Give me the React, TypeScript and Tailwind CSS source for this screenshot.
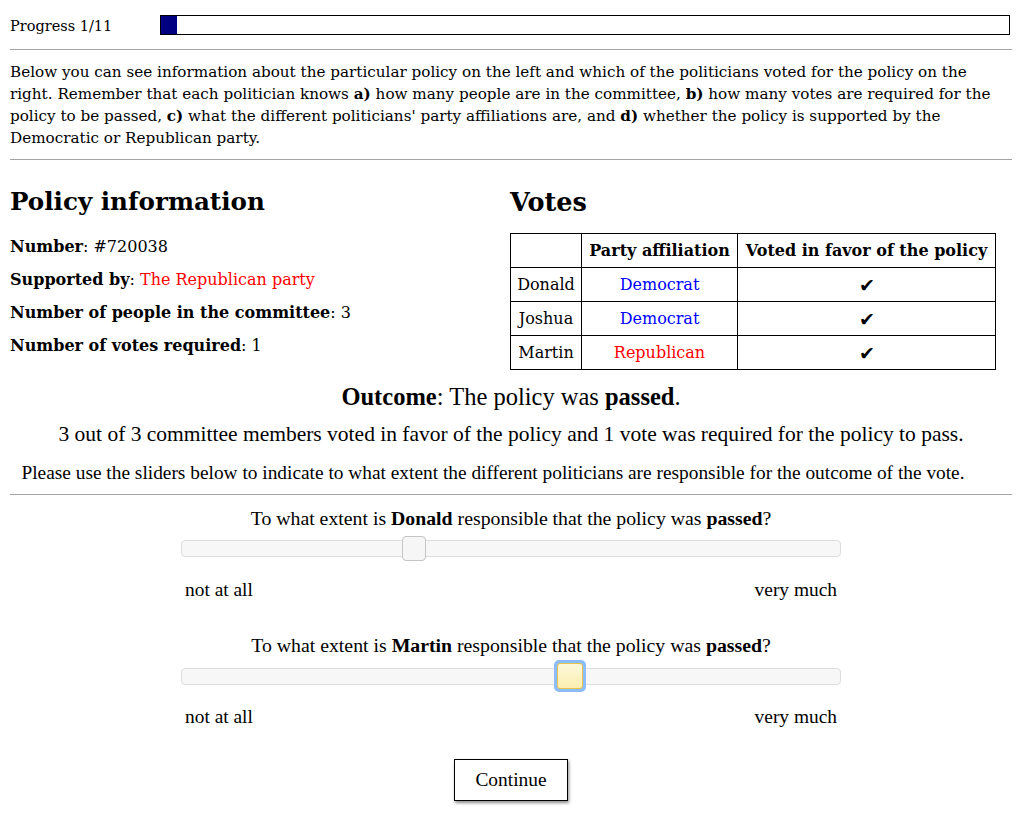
import React from 'react';

const rows = [
  { name: 'Donald', party: 'Democrat' },
  { name: 'Joshua', party: 'Democrat' },
  { name: 'Martin', party: 'Republican' },
];

function Slider({
  name,
  pos,
  focused,
  trackMt,
}: {
  name: string;
  pos: number;
  focused?: boolean;
  trackMt: string;
}) {
  return (
    <div className="mx-auto w-[660px]">
      <p className="whitespace-nowrap text-center text-[19.8px] leading-[24px]">
        To what extent is <b>{name}</b> responsible that the policy was <b>passed</b>?
      </p>
      <div className={`relative h-[17px] rounded-[4px] border border-[#dddddd] bg-[#f7f7f7] ${trackMt}`}>
        {focused ? (
          <div
            className="absolute top-[-9px] h-[32px] w-[32px] -translate-x-1/2 rounded-[5px] bg-[#8dbcfa] p-[3px]"
            style={{ left: `${pos}%` }}
          >
            <div className="h-full w-full rounded-[3px] border border-[#e6c34a] bg-gradient-to-b from-[#fef8da] to-[#fcefb0]" />
          </div>
        ) : (
          <div
            className="absolute top-[-5px] h-[25px] w-[24px] -translate-x-1/2 rounded-[4px] border border-[#c5c5c5] bg-[#f6f6f6]"
            style={{ left: `${pos}%` }}
          />
        )}
      </div>
    </div>
  );
}

function Labels({ mt }: { mt: string }) {
  return (
    <div className={`mx-auto flex w-[660px] justify-between px-[4px] text-[19.4px] leading-[24px] ${mt}`}>
      <span>not at all</span>
      <span>very much</span>
    </div>
  );
}

export default function App() {
  return (
    <div className="min-h-[814px] bg-white pb-[12px] pl-[10px] pr-[7px] font-['DejaVu_Serif',serif] text-black">
      <div className="mt-[15px] flex h-[20px] items-center">
        <div className="mt-[2px] w-[150px] text-[14.5px] leading-[20px]">Progress 1/11</div>
        <div className="mr-[2px] h-[20px] flex-1 border border-black">
          <div className="h-full w-[16px] bg-[#000080]" />
        </div>
      </div>

      <hr className="mt-[14px] border-t border-[#a3a3a3]" />

      <p className="mt-[11px] text-[15.2px] leading-[22px]">
        Below you can see information about the particular policy on the left and which of the politicians voted for
        the policy on the right. Remember that each politician knows <b>a)</b> how many people are in the committee,{' '}
        <b>b)</b> how many votes are required for the policy to be passed, <b>c)</b> what the different politicians'
        party affiliations are, and <b>d)</b> whether the policy is supported by the Democratic or Republican party.
      </p>

      <hr className="mt-[10px] border-t border-[#a3a3a3]" />

      <div className="mt-[26px] grid grid-cols-[500px_1fr]">
        <div>
          <h2 className="text-[24.6px] font-bold leading-[32px]">Policy information</h2>
          <div className="mt-[12px] text-[16px] leading-[33px]">
            <div>
              <b>Number</b>: #720038
            </div>
            <div>
              <b>Supported by</b>: <span className="text-[#ff0000]">The Republican party</span>
            </div>
            <div>
              <b>Number of people in the committee</b>: 3
            </div>
            <div>
              <b>Number of votes required</b>: 1
            </div>
          </div>
        </div>
        <div>
          <h2 className="text-[25.5px] font-bold leading-[32px]">Votes</h2>
          <table className="mt-[15px] border-collapse text-[16px]">
            <thead>
              <tr className="h-[34px]">
                <th className="w-[71px] border border-black" />
                <th className="w-[156px] border border-black px-[4px] font-bold">Party affiliation</th>
                <th className="w-[258px] border border-black px-[4px] font-bold">Voted in favor of the policy</th>
              </tr>
            </thead>
            <tbody>
              {rows.map((r) => (
                <tr key={r.name} className="h-[34px]">
                  <td className="border border-black px-[4px] text-center">{r.name}</td>
                  <td
                    className={`border border-black px-[4px] text-center ${
                      r.party === 'Democrat' ? 'text-[#0000ff]' : 'text-[#ff0000]'
                    }`}
                  >
                    {r.party}
                  </td>
                  <td className="border border-black text-center text-[19px] leading-[20px]">✔</td>
                </tr>
              ))}
            </tbody>
          </table>
        </div>
      </div>

      <div className="font-['Liberation_Serif',serif]">
        <p className="mt-[13px] whitespace-nowrap text-center text-[24.5px] leading-[28px]">
          <b>Outcome</b>: The policy was <b>passed</b>.
        </p>
        <p className="mt-[9px] whitespace-nowrap text-center text-[21.5px] leading-[28px]">
          3 out of 3 committee members voted in favor of the policy and 1 vote was required for the policy to pass.
        </p>
        <p className="mt-[13px] whitespace-nowrap pr-[36px] text-center text-[19.36px] leading-[24px]">
          Please use the sliders below to indicate to what extent the different politicians are responsible for the
          outcome of the vote.
        </p>

        <hr className="mt-[9px] border-t border-[#a3a3a3]" />

        <div className="mt-[11px]">
          <Slider name="Donald" pos={35.2} trackMt="mt-[10px]" />
        </div>
        <Labels mt="mt-[21px]" />

        <div className="mt-[31px]">
          <Slider name="Martin" pos={59} focused trackMt="mt-[11px]" />
        </div>
        <Labels mt="mt-[20px]" />

        <div className="mt-[30px] flex justify-center">
          <button className="h-[42px] w-[114px] border border-black bg-white text-[19.4px] shadow-[1px_2px_3px_rgba(0,0,0,0.45)]">
            Continue
          </button>
        </div>
      </div>
    </div>
  );
}
